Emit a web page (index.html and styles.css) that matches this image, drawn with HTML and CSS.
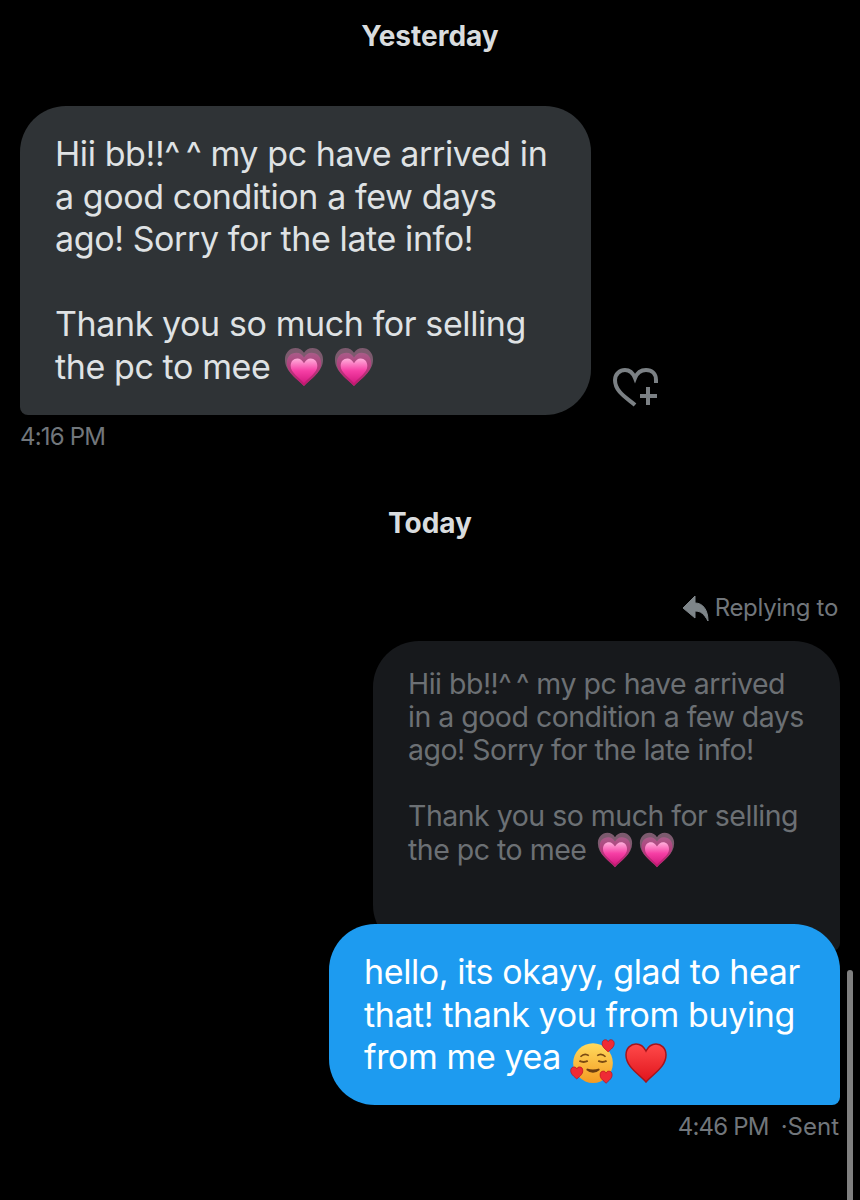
FILE: index.html
```html
<!DOCTYPE html>
<html lang="en">
<head>
    <meta charset="UTF-8">
    <meta name="viewport" content="width=device-width, initial-scale=1.0">
    <title>Messages</title>
    <link rel="stylesheet" href="styles.css">
</head>
<body>
    <svg class="defs" width="0" height="0">
        <defs>
            <linearGradient id="pink-core" x1="0" y1="0" x2="0" y2="1">
                <stop offset="0" stop-color="#ffb0dc"/>
                <stop offset="0.5" stop-color="#f63fa5"/>
                <stop offset="1" stop-color="#d41a80"/>
            </linearGradient>
            <linearGradient id="pink-mid" x1="0" y1="0" x2="0" y2="1">
                <stop offset="0" stop-color="#a85c88"/>
                <stop offset="1" stop-color="#c2146f"/>
            </linearGradient>
            <linearGradient id="red-core" x1="0" y1="0" x2="0" y2="1">
                <stop offset="0" stop-color="#ff4a4a"/>
                <stop offset="1" stop-color="#e0141c"/>
            </linearGradient>
            <linearGradient id="face" x1="0" y1="0" x2="0" y2="1">
                <stop offset="0" stop-color="#ffdb5e"/>
                <stop offset="1" stop-color="#f59b22"/>
            </linearGradient>
            <symbol id="growing-heart" viewBox="0 0 42 42">
                <path d="M21 41C14 33 1 26 1 13 1 6 6 1 12 1c4 0 7 2 9 5 2-3 5-5 9-5 6 0 11 5 11 12 0 13-13 20-20 28z" fill="#7c5a6e"/>
                <path d="M21 41C15 34 3 28 3 17 3 10 7 6 13 6c4 0 6 2 8 5 2-3 4-5 8-5 6 0 10 4 10 11 0 11-12 17-18 24z" fill="url(#pink-mid)"/>
                <path d="M21 38C16 32 7 27 7 20c0-5 3-8 7-8 3 0 5 2 7 5 2-3 4-5 7-5 4 0 7 3 7 8 0 7-9 12-14 18z" fill="url(#pink-core)"/>
            </symbol>
            <symbol id="small-heart" viewBox="0 0 20 20">
                <path d="M10 19C6 15 1 12 1 6.500 1 3 3.500 1 6 1c2 0 3 1 4 3 1-2 2-3 4-3 2.500 0 5 2 5 5.500C19 12 14 15 10 19z" fill="#ef2b35" stroke="#b5121b" stroke-width="1"/>
            </symbol>
        </defs>
    </svg>

    <div class="chat">
        <div class="day-label">Yesterday</div>

        <div class="row-in">
            <div class="bubble bubble-in">Hii bb!!^&#8201;^ my pc have arrived in a good condition a few days ago! Sorry for the late info!<br><br>Thank you so much for selling the pc to mee <svg class="emoji"><use href="#growing-heart"/></svg> <svg class="emoji"><use href="#growing-heart"/></svg></div>
            <svg class="react-icon" viewBox="0 0 46 40" width="46" height="40">
                <path d="M22 37C14 30 2 24 2 12 2 6 7 2 12 2c5 0 8 3 10 8 2-5 6-8 11-8 6 0 10 4 10 10v3" fill="none" stroke="#7b8084" stroke-width="4"/>
                <path d="M35 19v18M27 28h17" fill="none" stroke="#7b8084" stroke-width="4"/>
            </svg>
        </div>
        <div class="time time-in">4:16 PM</div>

        <div class="day-label day-today">Today</div>

        <div class="replying">
            <svg class="reply-icon" viewBox="0 0 27 27" width="27" height="27">
                <path d="M1 13 13 1V8C21 8 26 15 26 26 22 19 19 16 13 16V23Z" fill="#7e8589" stroke="#7e8589" stroke-width="1" stroke-linejoin="round"/>
            </svg>
            <span>Replying to</span>
        </div>
        <div class="bubble-reply">Hii bb!!^&#8201;^ my pc have arrived in a good condition a few days ago! Sorry for the late info!<br><br>Thank you so much for selling the pc to mee <svg class="emoji emoji-small"><use href="#growing-heart"/></svg> <svg class="emoji emoji-small"><use href="#growing-heart"/></svg></div>
        <div class="bubble bubble-out">hello, its okayy, glad to hear that! thank you from buying from me yea
            <svg class="emoji-flat emoji-face" viewBox="0 0 44 44">
                <circle cx="22" cy="23" r="19" fill="url(#face)"/>
                <path d="M10 17q4-4 8-1M26 16q4-3 8 1" fill="none" stroke="#7a4a12" stroke-width="1.500"/>
                <path d="M9 21q4 2 8 0M27 21q4 2 8 0" fill="none" stroke="#7a4a12" stroke-width="1.800"/>
                <path d="M16 29q6 5 12 0-6 2-12 0z" fill="#6b3d10" stroke="#6b3d10" stroke-width="1.500"/>
                <use href="#small-heart" x="30" y="0" width="13" height="13"/>
                <use href="#small-heart" x="0" y="26" width="13" height="13"/>
                <use href="#small-heart" x="28" y="30" width="13" height="13"/>
            </svg>
            <svg class="emoji-flat" viewBox="0 0 42 42">
                <path d="M21 40C14 32 1 25 1 13 1 6 6 2 11 2c5 0 8 3 10 7 2-4 5-7 10-7 5 0 10 4 10 11 0 12-13 19-20 27z" fill="url(#red-core)" stroke="#a5141c" stroke-width="1.500"/>
            </svg>
        </div>
        <div class="time time-out"><span>4:46 PM</span><span class="sent">&middot;Sent</span></div>
    </div>

    <div class="scroll-thumb"></div>
</body>
</html>
```

FILE: styles.css
```css
* {
    margin: 0;
    padding: 0;
    box-sizing: border-box;
}

html,
body {
    height: 1200px;
    overflow: hidden;
}

body {
    position: relative;
    background-color: #000;
    color: #e7e9ea;
    font-family: Inter, "Noto Sans", sans-serif;
}

.defs {
    position: absolute;
}

.chat {
    display: flex;
    flex-direction: column;
    padding: 18px 20px 0;
}

.day-label {
    text-align: center;
    font-size: 28px;
    line-height: 36px;
    font-weight: 700;
    color: #d9dcde;
}

.day-today {
    margin-top: 53px;
}

.row-in {
    display: flex;
    align-items: flex-end;
    gap: 22px;
    margin-top: 52px;
}

.bubble {
    font-size: 34px;
    line-height: 42.500px;
    letter-spacing: -0.400px;
}

.bubble-in {
    width: 571px;
    height: 309px;
    padding: 27px 36px 0 35px;
    background-color: #2f3336;
    border-radius: 46px 46px 46px 8px;
    color: #dfe2e4;
}

.react-icon {
    margin-bottom: 7px;
}

.emoji {
    width: 40px;
    height: 42px;
    margin-left: 4px;
    vertical-align: -9px;
}

.emoji + .emoji {
    margin-left: 1px;
}

.emoji-small {
    width: 36px;
    height: 36px;
    margin-left: 3px;
    vertical-align: -8px;
}

.emoji-small + .emoji-small {
    margin-left: -1px;
}

.emoji-flat {
    width: 42px;
    height: 42px;
    margin-top: -6px;
    margin-bottom: -6px;
    vertical-align: -9px;
}

.emoji-face {
    width: 46px;
    height: 46px;
    vertical-align: -10px;
}

.time {
    font-size: 24px;
    line-height: 30px;
    color: #71767b;
    letter-spacing: -0.800px;
}

.time-in {
    margin-top: 7px;
}

.replying {
    display: flex;
    justify-content: flex-end;
    align-items: center;
    gap: 6px;
    margin-top: 51px;
    margin-right: 2px;
    font-size: 24px;
    line-height: 32px;
    color: #71767b;
    letter-spacing: -0.300px;
}

.bubble-reply {
    align-self: flex-end;
    width: 467px;
    height: 310px;
    margin-top: 17px;
    padding: 26px 30px 0 35px;
    background-color: #17191c;
    border-radius: 46px 46px 8px 46px;
    color: #6c7074;
    font-size: 28.500px;
    line-height: 33px;
    letter-spacing: -0.500px;
}

.bubble-out {
    align-self: flex-end;
    width: 511px;
    height: 181px;
    margin-top: -27px;
    padding: 27px 30px 0 35px;
    background-color: #1d9bf0;
    border-radius: 46px 46px 8px 46px;
    color: #fff;
}

.time-out {
    display: flex;
    justify-content: flex-end;
    gap: 12px;
    margin-top: 7px;
    margin-right: 1px;
}

.sent {
    letter-spacing: 0;
}

.scroll-thumb {
    position: absolute;
    top: 970px;
    right: 7px;
    width: 6px;
    height: 230px;
    background-color: #808080;
    border-radius: 3px 3px 0 0;
}
```
